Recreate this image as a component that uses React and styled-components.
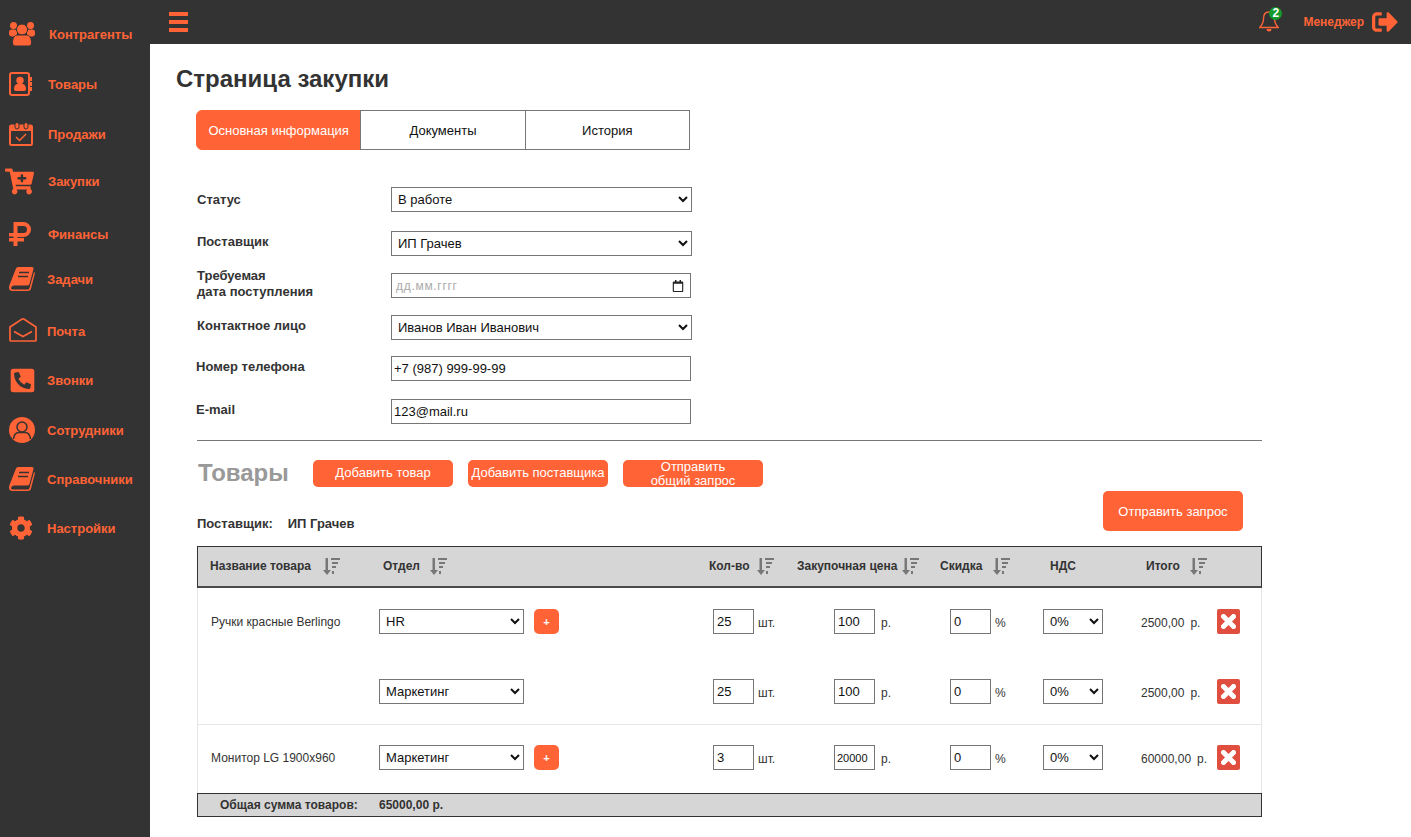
import React from 'react'
import styled, { createGlobalStyle } from 'styled-components'
import { FaCartPlus, FaPhoneSquareAlt, FaCog, FaSignOutAlt, FaRegCalendar } from 'react-icons/fa'

const orange = '#ff6336'
const dark = '#333333'

const GlobalStyle = createGlobalStyle`
  html, body { margin: 0; padding: 0; background: #fff; }
  body { font-family: "Liberation Sans", Arial, sans-serif; color: ${dark}; overflow: hidden; }
  * { box-sizing: border-box; }
`

const UsersIcon = () => (
  <svg width="26" height="24" viewBox="0 0 26 24" fill={orange}>
    <circle cx="4.5" cy="3.5" r="3.5" />
    <circle cx="21.5" cy="3.5" r="3.5" />
    <rect x="0" y="7.5" width="8" height="7" rx="3" />
    <rect x="18" y="7.5" width="8" height="7" rx="3" />
    <circle cx="13" cy="7.5" r="5.5" stroke={dark} />
    <path d="M3.5 21c0-5 2-8 5-8h9c3 0 5 3 5 8 0 2-1.5 3-3 3h-13c-1.5 0-3-1-3-3z" stroke={dark} />
  </svg>
)

const ContactsIcon = () => (
  <svg width="23" height="24" viewBox="0 0 23 24" fill={orange}>
    <rect x="1" y="1" width="19" height="22" rx="2" fill="none" stroke={orange} strokeWidth="2" />
    <rect x="21" y="5" width="2" height="4" />
    <rect x="21" y="10" width="2" height="4" />
    <rect x="21" y="15" width="2" height="4" />
    <circle cx="11" cy="8.5" r="3.7" />
    <path d="M5 17c0-3 1.5-5 3.5-5h5c2 0 3.5 2 3.5 5 0 1-.7 2-1.7 2H6.700c-1 0-1.700-1-1.700-2z" />
  </svg>
)

const CalendarIcon = () => (
  <svg width="24" height="24" viewBox="0 0 24 24" fill={orange}>
    <rect x="1" y="3.500" width="22" height="19.500" rx="1.500" fill="none" stroke={orange} strokeWidth="2" />
    <rect x="1" y="3" width="22" height="6" />
    <rect x="6" y="0.500" width="4" height="6.500" rx="2" stroke={dark} />
    <rect x="15" y="0.500" width="4" height="6.500" rx="2" stroke={dark} />
    <path d="M7 15l3.500 3.500L17 12" fill="none" stroke={orange} strokeWidth="1.500" />
  </svg>
)

const RubleIcon = () => (
  <svg width="22" height="24" viewBox="0 0 22 24" fill={orange}>
    <path fillRule="evenodd" d="M4.500 0H14.500a7.500 7.500 0 0 1 0 15H8.500v1H15v3.500H8.500V24h-4v-4.500H0V16h4.500v-1.500H0V11h4.500zM8.500 4v7h6a3.500 3.500 0 0 0 0-7z" />
  </svg>
)

const BookIcon = () => (
  <svg width="26" height="24" viewBox="0 0 26 24" fill={orange}>
    <path d="M7 1.500Q7.500 0 9 0H23q2 0 1.500 2L20.500 17q-.5 1.500-2.500 1.500H5q-2.500 0-3 2.500 0 1.500 2.500 1.500h14q1.500 0 2-1.500L25 5l1 1-4 15.500q-.5 2.500-3.500 2.500H4Q0 24 0 20.500q0-1 .5-2.500z" />
    <path d="M10 5.500h10M9 9.500h10" stroke={dark} strokeWidth="1.500" />
  </svg>
)

const MailIcon = () => (
  <svg width="28" height="26" viewBox="0 0 28 26" fill="none" stroke={orange} strokeWidth="1.700">
    <path d="M1 9L12.800 1.200q1.200-.6 2.400 0L27 9V22q0 1-1 1H2q-1 0-1-1z" />
    <path d="M5 13.500l9 5 9-5" />
  </svg>
)

const UserIcon = () => (
  <svg width="26" height="26" viewBox="0 0 26 26" fill={orange}>
    <circle cx="13" cy="13" r="13" />
    <circle cx="13" cy="10" r="5" stroke={dark} strokeWidth="1.500" />
    <path d="M4.500 22c.5-4.500 2-6.500 5.500-6.500h6c3.500 0 5 2 5.500 6.500" stroke={dark} strokeWidth="1.500" />
  </svg>
)

const BellIcon = () => (
  <svg width="20" height="21" viewBox="0 0 20 21" fill="none" stroke={orange} strokeWidth="1.400">
    <path d="M10 1C5.500 1 4.500 4.500 4.500 7.500 4.500 11.500 3 14 .8 16.500h18.400C17 14 15.500 11.500 15.500 7.500 15.500 4.500 14.500 1 10 1z" />
    <path d="M7.500 18a2.500 2.500 0 0 0 5 0z" fill={orange} stroke="none" />
  </svg>
)

const SortIcon = () => (
  <svg width="17" height="17" viewBox="0 0 17 17" fill="#777">
    <path d="M2.500 0h2.500v12h3l-4 5-4-5h2.500z" />
    <rect x="8" y="0" width="9" height="2" />
    <rect x="9" y="4" width="6" height="2" />
    <rect x="9" y="8" width="4" height="2" />
    <rect x="9" y="13" width="2" height="3" />
  </svg>
)

const BurgerIcon = () => (
  <svg width="19" height="20" viewBox="0 0 19 20" fill={orange}>
    <rect x="0" y="0" width="19" height="4" />
    <rect x="0" y="8" width="19" height="4" />
    <rect x="0" y="16" width="19" height="4" />
  </svg>
)

const CrossIcon = () => (
  <svg width="15" height="15" viewBox="0 0 15 15" fill="none" stroke="#fff" strokeWidth="5" strokeLinecap="round">
    <path d="M2.500 2.500l10 10M12.500 2.500l-10 10" />
  </svg>
)

const menu = [
  { icon: <UsersIcon />, title: 'Контрагенты', gap: 0, shift: 2 },
  { icon: <ContactsIcon />, title: 'Товары', gap: 10, shift: 1 },
  { icon: <CalendarIcon />, title: 'Продажи', gap: 10, shift: 1 },
  { icon: <FaCartPlus size={29} />, title: 'Закупки', gap: 7, shift: 1, left: 4 },
  { icon: <RubleIcon />, title: 'Финансы', gap: 13, shift: 1 },
  { icon: <BookIcon />, title: 'Задачи', gap: 5, shift: 0 },
  { icon: <MailIcon />, title: 'Почта', gap: 12, shift: 0 },
  { icon: <FaPhoneSquareAlt size={27} />, title: 'Звонки', gap: 9, shift: 0 },
  { icon: <UserIcon />, title: 'Сотрудники', gap: 10, shift: 0 },
  { icon: <BookIcon />, title: 'Справочники', gap: 9, shift: 0 },
  { icon: <FaCog size={24} />, title: 'Настройки', gap: 9, shift: 0 },
]

const fields = [
  { label: 'Статус', type: 'select', value: 'В работе', gap: 0, lift: 0 },
  { label: 'Поставщик', type: 'select', value: 'ИП Грачев', gap: 19, lift: 2 },
  { label: <>Требуемая<br />дата поступления</>, type: 'date', gap: 17, lift: 2 },
  { label: 'Контактное лицо', type: 'select', value: 'Иванов Иван Иванович', gap: 17, lift: 2 },
  { label: 'Номер телефона', type: 'input', value: '+7 (987) 999-99-99', gap: 16, lift: 2, out: 1 },
  { label: 'E-mail', type: 'input', value: '123@mail.ru', gap: 18, lift: 2, out: 1 },
]

const columns = [
  { title: 'Название товара', sort: true, gap: 12 },
  { title: 'Отдел', sort: true, gap: 10 },
  { title: 'Кол-во', sort: true, gap: 7 },
  { title: 'Закупочная цена', sort: true, gap: 5 },
  { title: 'Скидка', sort: true, gap: 11 },
  { title: 'НДС', sort: false },
  { title: 'Итого', sort: true, gap: 10 },
]

const Product = ({ name, dept, qty, price, priceSmall, total, plus }) => (
  <Row>
    <ProductName>{name}</ProductName>
    <DeptCell>
      <DeptSelect defaultValue={dept}>
        <option>{dept}</option>
      </DeptSelect>
      {plus && <PlusButton>+</PlusButton>}
    </DeptCell>
    <Cell>
      <NumberInput defaultValue={qty} />
      <Unit>шт.</Unit>
    </Cell>
    <Cell>
      <NumberInput $small={priceSmall} defaultValue={price} />
      <Unit $wide>р.</Unit>
    </Cell>
    <Cell>
      <NumberInput defaultValue="0" />
      <Unit>%</Unit>
    </Cell>
    <Cell>
      <VatSelect defaultValue="0%">
        <option>0%</option>
      </VatSelect>
    </Cell>
    <TotalCell>
      {total}
      <Unit $wide>р.</Unit>
    </TotalCell>
    <DeleteButton><CrossIcon /></DeleteButton>
  </Row>
)

const App = () => (
  <Page>
    <GlobalStyle />
    <Sidebar>
      {menu.map((item, index) => (
        <MenuItem key={index} $gap={item.gap}>
          <MenuIcon $left={item.left}>{item.icon}</MenuIcon>
          <MenuLabel $shift={item.shift}>{item.title}</MenuLabel>
        </MenuItem>
      ))}
    </Sidebar>

    <Main>
      <TopBar>
        <BurgerIcon />
        <TopRight>
          <Bell>
            <BellIcon />
            <BellBadge>2</BellBadge>
          </Bell>
          <UserName>Менеджер</UserName>
          <FaSignOutAlt size={26} />
        </TopRight>
      </TopBar>

      <Content>
        <Title>Страница закупки</Title>

        <Tabs>
          <Tab $active>Основная информация</Tab>
          <Tab>Документы</Tab>
          <Tab>История</Tab>
        </Tabs>

        <Form>
          {fields.map((field, index) => (
            <FormRow key={index} $gap={field.gap}>
              <FieldLabel $lift={field.lift} $out={field.out}>{field.label}</FieldLabel>
              {field.type === 'select' && (
                <FieldSelect defaultValue={field.value}>
                  <option>{field.value}</option>
                </FieldSelect>
              )}
              {field.type === 'input' && <FieldInput defaultValue={field.value} />}
              {field.type === 'date' && (
                <DateField>
                  <DatePlaceholder>дд.мм.гггг</DatePlaceholder>
                  <FaRegCalendar size={12} color="#222" />
                </DateField>
              )}
            </FormRow>
          ))}
        </Form>

        <Divider />

        <GoodsHead>
          <GoodsTitle>Товары</GoodsTitle>
          <SmallButton>Добавить товар</SmallButton>
          <SmallButton>Добавить поставщика</SmallButton>
          <SmallButton>Отправить<br />общий запрос</SmallButton>
        </GoodsHead>

        <SupplierRow>
          <SupplierText>
            Поставщик:<SupplierName>ИП Грачев</SupplierName>
          </SupplierText>
          <SendButton>Отправить запрос</SendButton>
        </SupplierRow>

        <Table>
          <HeadRow>
            {columns.map((col, index) => (
              <HeadCell key={index} $gap={col.gap}>
                {col.title}
                {col.sort && <SortIcon />}
              </HeadCell>
            ))}
          </HeadRow>

          <Group $top={21} $bottom={20} $border>
            <Product name="Ручки красные Berlingo" dept="HR" qty="25" price="100" total="2500,00" plus />
            <RowGap />
            <Product dept="Маркетинг" qty="25" price="100" total="2500,00" />
          </Group>

          <Group $top={20} $bottom={23}>
            <Product name="Монитор LG 1900x960" dept="Маркетинг" qty="3" price="20000" priceSmall total="60000,00" plus />
          </Group>

          <SumRow>
            <SumLabel>Общая сумма товаров:</SumLabel>
            <span>65000,00 р.</span>
          </SumRow>
        </Table>
      </Content>
    </Main>
  </Page>
)

export default App

const Page = styled.div`
  display: flex;
  height: 837px;
  overflow: hidden;
`

const Sidebar = styled.nav`
  width: 150px;
  flex: none;
  background: ${dark};
  padding-top: 14px;
`

const MenuItem = styled.div`
  display: flex;
  align-items: center;
  height: 40px;
  margin-top: ${({ $gap }) => $gap}px;
  padding-left: 9px;
`

const MenuIcon = styled.div`
  width: ${({ $left }) => 38 + ($left || 0)}px;
  display: flex;
  align-items: center;
  color: ${orange};
  margin-left: ${({ $left }) => -($left || 0)}px;
`

const MenuLabel = styled.span`
  color: ${orange};
  font-size: 13px;
  font-weight: 700;
  margin-left: ${({ $shift }) => $shift}px;
`

const Main = styled.div`
  flex: 1;
  min-width: 0;
`

const TopBar = styled.header`
  height: 44px;
  background: ${dark};
  display: flex;
  align-items: center;
  justify-content: space-between;
  padding: 0 13px 1px 19px;
  color: ${orange};
`

const TopRight = styled.div`
  display: flex;
  align-items: center;
`

const Bell = styled.div`
  position: relative;
  display: flex;
  margin-right: 24px;
`

const BellBadge = styled.span`
  position: absolute;
  top: -4px;
  right: -3px;
  width: 13px;
  height: 13px;
  border-radius: 50%;
  background: #129a2c;
  color: #fff;
  font-size: 12px;
  font-weight: 700;
  line-height: 13px;
  text-align: center;
`

const UserName = styled.span`
  font-size: 12px;
  font-weight: 700;
  margin-right: 8px;
`

const Content = styled.main`
  padding: 21px 0 0 26px;
`

const Title = styled.h1`
  margin: 0;
  font-size: 24px;
  line-height: 28px;
  font-weight: 700;
  color: ${dark};
`

const Tabs = styled.div`
  display: flex;
  margin: 17px 0 0 20px;
  width: 494px;
  height: 40px;
`

const Tab = styled.div`
  flex: 1;
  display: flex;
  align-items: center;
  justify-content: center;
  font-size: 13px;
  color: ${({ $active }) => ($active ? '#fff' : '#111')};
  background: ${({ $active }) => ($active ? orange : '#fff')};
  border: 1px solid ${({ $active }) => ($active ? orange : '#777')};
  margin-left: -1px;
  &:first-child {
    margin-left: 0;
    border-radius: 6px 0 0 6px;
  }
`

const Form = styled.div`
  margin: 37px 0 0 21px;
`

const FormRow = styled.div`
  display: flex;
  align-items: center;
  height: 25px;
  margin-top: ${({ $gap }) => $gap}px;
`

const FieldLabel = styled.div`
  width: ${({ $out }) => 194 + ($out || 0)}px;
  margin-left: ${({ $out }) => -($out || 0)}px;
  padding-bottom: ${({ $lift }) => $lift * 2}px;
  font-size: 13px;
  line-height: 16px;
  font-weight: 700;
  color: ${dark};
`

const controlBase = `
  height: 25px;
  border: 1px solid #767676;
  border-radius: 0;
  background: #fff;
  color: #111;
  font-family: "Liberation Sans", Arial, sans-serif;
  outline: none;
`

const FieldSelect = styled.select`
  ${controlBase}
  width: 301px;
  font-size: 13px;
  padding: 0 2px;
`

const FieldInput = styled.input`
  ${controlBase}
  width: 300px;
  font-size: 13px;
  padding: 0 2px;
`

const DateField = styled.div`
  ${controlBase}
  width: 300px;
  display: flex;
  align-items: center;
  justify-content: space-between;
  padding: 0 6px 0 4px;
`

const DatePlaceholder = styled.span`
  font-size: 12px;
  letter-spacing: 0.7px;
  color: #aaa;
`

const Divider = styled.hr`
  margin: 16px 0 0 21px;
  width: 1065px;
  border: 0;
  border-top: 1px solid #777;
`

const GoodsHead = styled.div`
  display: flex;
  align-items: center;
  margin: 18px 0 0 22px;
  gap: 15px;
`

const GoodsTitle = styled.h2`
  margin: 0;
  width: 100px;
  font-size: 24px;
  font-weight: 700;
  color: #999;
`

const SmallButton = styled.button`
  width: 140px;
  height: 27px;
  padding: 0;
  border: 0;
  border-radius: 5px;
  background: ${orange};
  color: #fff;
  font-family: inherit;
  font-size: 13px;
  line-height: 14px;
  overflow: hidden;
`

const SupplierRow = styled.div`
  display: flex;
  justify-content: space-between;
  align-items: flex-end;
  width: 1046px;
  margin: 4px 0 0 21px;
`

const SupplierText = styled.div`
  font-size: 13px;
  font-weight: 700;
  color: ${dark};
`

const SupplierName = styled.span`
  margin-left: 15px;
`

const SendButton = styled.button`
  width: 140px;
  height: 40px;
  border: 0;
  border-radius: 5px;
  background: ${orange};
  color: #fff;
  font-family: inherit;
  font-size: 13px;
`

const Table = styled.section`
  width: 1065px;
  margin: 15px 0 0 21px;
`

const HeadRow = styled.div`
  display: grid;
  grid-template-columns: 173px 326px 88px 143px 110px 96px 1fr;
  align-items: center;
  height: 42px;
  padding-left: 12px;
  padding-bottom: 1px;
  background: #d6d6d6;
  border: 1px solid ${dark};
  border-width: 1px 1px 2px;
  border-bottom-color: #4a4a4a;
`

const HeadCell = styled.div`
  display: flex;
  align-items: center;
  gap: ${({ $gap }) => $gap || 0}px;
  font-size: 12px;
  font-weight: 700;
  color: ${dark};
`

const Group = styled.div`
  padding: ${({ $top }) => $top}px 0 ${({ $bottom }) => $bottom}px;
  border-left: 1px solid #e6e6e6;
  border-right: 1px solid #e6e6e6;
  border-bottom: ${({ $border }) => ($border ? '1px solid #e6e6e6' : '0')};
`

const RowGap = styled.div`
  height: 45px;
`

const Row = styled.div`
  display: grid;
  grid-template-columns: 168px 334px 121px 116px 93px 98px 76px 23px;
  align-items: center;
  height: 25px;
  padding-left: 13px;
`

const ProductName = styled.div`
  font-size: 12px;
  color: ${dark};
`

const DeptCell = styled.div`
  display: flex;
  align-items: center;
  gap: 10px;
`

const DeptSelect = styled.select`
  ${controlBase}
  width: 145px;
  font-size: 13px;
  padding: 0 2px;
`

const PlusButton = styled.button`
  width: 25px;
  height: 25px;
  padding: 0;
  border: 0;
  border-radius: 5px;
  background: ${orange};
  color: #fff;
  font-family: inherit;
  font-size: 11px;
  font-weight: 700;
`

const Cell = styled.div`
  display: flex;
  align-items: center;
`

const NumberInput = styled.input`
  ${controlBase}
  width: 41px;
  font-size: ${({ $small }) => ($small ? '11px' : '13px')};
  padding: 0 ${({ $small }) => ($small ? '2px' : '3px')};
`

const Unit = styled.span`
  margin-left: ${({ $wide }) => ($wide ? '6px' : '4px')};
  padding-top: 2px;
  font-size: 12px;
  color: ${dark};
`

const VatSelect = styled.select`
  ${controlBase}
  width: 60px;
  font-size: 13px;
  padding: 0 2px;
`

const TotalCell = styled.div`
  padding-top: 2px;
  font-size: 12px;
  color: ${dark};
  white-space: nowrap;
`

const DeleteButton = styled.button`
  width: 23px;
  height: 25px;
  padding: 0;
  border: 0;
  border-radius: 2px;
  background: #e04e3f;
  display: flex;
  align-items: center;
  justify-content: center;
`

const SumRow = styled.div`
  display: flex;
  align-items: center;
  height: 24px;
  padding-left: 22px;
  background: #d6d6d6;
  border: 1px solid ${dark};
  font-size: 12px;
  font-weight: 700;
  color: ${dark};
`

const SumLabel = styled.span`
  width: 159px;
`
